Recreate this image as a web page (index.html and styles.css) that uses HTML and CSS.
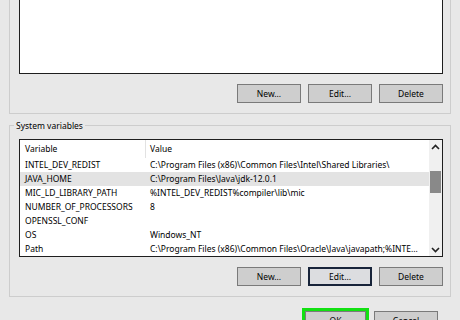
FILE: index.html
```html
<!DOCTYPE html>
<html lang="en">
<head>
    <meta charset="UTF-8">
    <title>Environment Variables</title>
    <link rel="stylesheet" href="styles.css">
</head>
<body>
    <div class="dialog">
        <div class="group-top">
            <div class="list list-top"></div>
            <div class="btn-row">
                <button class="btn">New...</button>
                <button class="btn">Edit...</button>
                <button class="btn">Delete</button>
            </div>
        </div>

        <fieldset class="group">
            <legend>System variables</legend>
            <div class="list list-vars">
                <div class="table">
                    <div class="row head">
                        <div class="cell col-name">Variable</div>
                        <div class="cell">Value</div>
                    </div>
                    <div class="row">
                        <div class="cell col-name">INTEL_DEV_REDIST</div>
                        <div class="cell">C:\Program Files (x86)\Common Files\Intel\Shared Libraries\</div>
                    </div>
                    <div class="row selected">
                        <div class="cell col-name">JAVA_HOME</div>
                        <div class="cell">C:\Program Files\Java\jdk-12.0.1</div>
                    </div>
                    <div class="row">
                        <div class="cell col-name">MIC_LD_LIBRARY_PATH</div>
                        <div class="cell">%INTEL_DEV_REDIST%compiler\lib\mic</div>
                    </div>
                    <div class="row">
                        <div class="cell col-name">NUMBER_OF_PROCESSORS</div>
                        <div class="cell">8</div>
                    </div>
                    <div class="row">
                        <div class="cell col-name">OPENSSL_CONF</div>
                        <div class="cell"></div>
                    </div>
                    <div class="row">
                        <div class="cell col-name">OS</div>
                        <div class="cell">Windows_NT</div>
                    </div>
                    <div class="row">
                        <div class="cell col-name">Path</div>
                        <div class="cell">C:\Program Files (x86)\Common Files\Oracle\Java\javapath;%INTE...</div>
                    </div>
                </div>
                <div class="scrollbar">
                    <div class="arrow">
                        <svg width="9" height="6" viewBox="0 0 9 6"><path d="M1 5 L4.5 1.5 L8 5" fill="none" stroke="#222" stroke-width="1.6"/></svg>
                    </div>
                    <div class="track">
                        <div class="thumb"></div>
                    </div>
                    <div class="arrow">
                        <svg width="9" height="6" viewBox="0 0 9 6"><path d="M1 1 L4.5 4.5 L8 1" fill="none" stroke="#222" stroke-width="1.6"/></svg>
                    </div>
                </div>
            </div>
            <div class="btn-row">
                <button class="btn">New...</button>
                <button class="btn btn-focus">Edit...</button>
                <button class="btn">Delete</button>
            </div>
        </fieldset>

        <div class="footer">
            <button class="btn btn-ok">OK</button>
            <button class="btn btn-cancel">Cancel</button>
        </div>
    </div>
</body>
</html>
```

FILE: styles.css
```css
body {
    margin: 0;
    width: 460px;
    height: 320px;
    overflow: hidden;
    background-color: #e8e8e8;
    font-family: "Noto Sans", "DejaVu Sans", sans-serif;
    font-size: 8.5px;
    color: #000;
}
.group-top {
    margin: 0 9px;
    border: 1px solid #cdcdcd;
    border-top: none;
    padding: 0 7px 10px 9px;
}
.list {
    background-color: #fff;
    border: 1px solid #1e1e1e;
    box-sizing: border-box;
}
.list-top {
    height: 74px;
    border-top: none;
}
.btn-row {
    display: flex;
    justify-content: flex-end;
    gap: 7px;
    margin-top: 10px;
}
.btn {
    width: 64px;
    height: 19px;
    padding: 0;
    box-sizing: border-box;
    background-color: #cecece;
    border: 1px solid #7a7a7a;
    font-family: inherit;
    font-size: 8.5px;
    color: #000;
    text-align: center;
}
.btn-focus {
    border: 2px solid #18243a;
    background-color: #dcdde0;
}
.group {
    margin: 4px 9px 0 9px;
    padding: 0 7px 10px 9px;
    border: 1px solid #cdcdcd;
    min-inline-size: 0;
}
.group legend {
    padding: 2px 2px 0;
    margin-left: -5px;
    line-height: 12px;
}
.list-vars {
    display: flex;
    height: 118px;
    margin-top: 7px;
    overflow: hidden;
}
.table {
    flex: 1;
    min-width: 0;
}
.row {
    display: grid;
    grid-template-columns: 126px 1fr;
    height: 14px;
    line-height: 14px;
}
.row.head {
    height: 18px;
    line-height: 18px;
}
.row.selected {
    background-color: #e3e3e3;
}
.cell {
    padding-left: 5px;
    white-space: nowrap;
    overflow: hidden;
}
.cell + .cell {
    padding-left: 4px;
}
.head .col-name {
    border-right: 1px solid #e2e2e2;
}
.scrollbar {
    width: 13px;
    display: flex;
    flex-direction: column;
    background-color: #f0f0f0;
}
.arrow {
    height: 13px;
    display: flex;
    align-items: center;
    justify-content: center;
}
.track {
    flex: 1;
}
.thumb {
    margin-top: 18px;
    height: 22px;
    background-color: #898989;
    margin-left: 1px;
    margin-right: 1px;
}
.footer {
    display: flex;
    justify-content: flex-end;
    gap: 8px;
    margin-top: 14px;
    padding-right: 22px;
}
.btn-ok {
    width: 61px;
    outline: 3px solid #12e012;
}
```
